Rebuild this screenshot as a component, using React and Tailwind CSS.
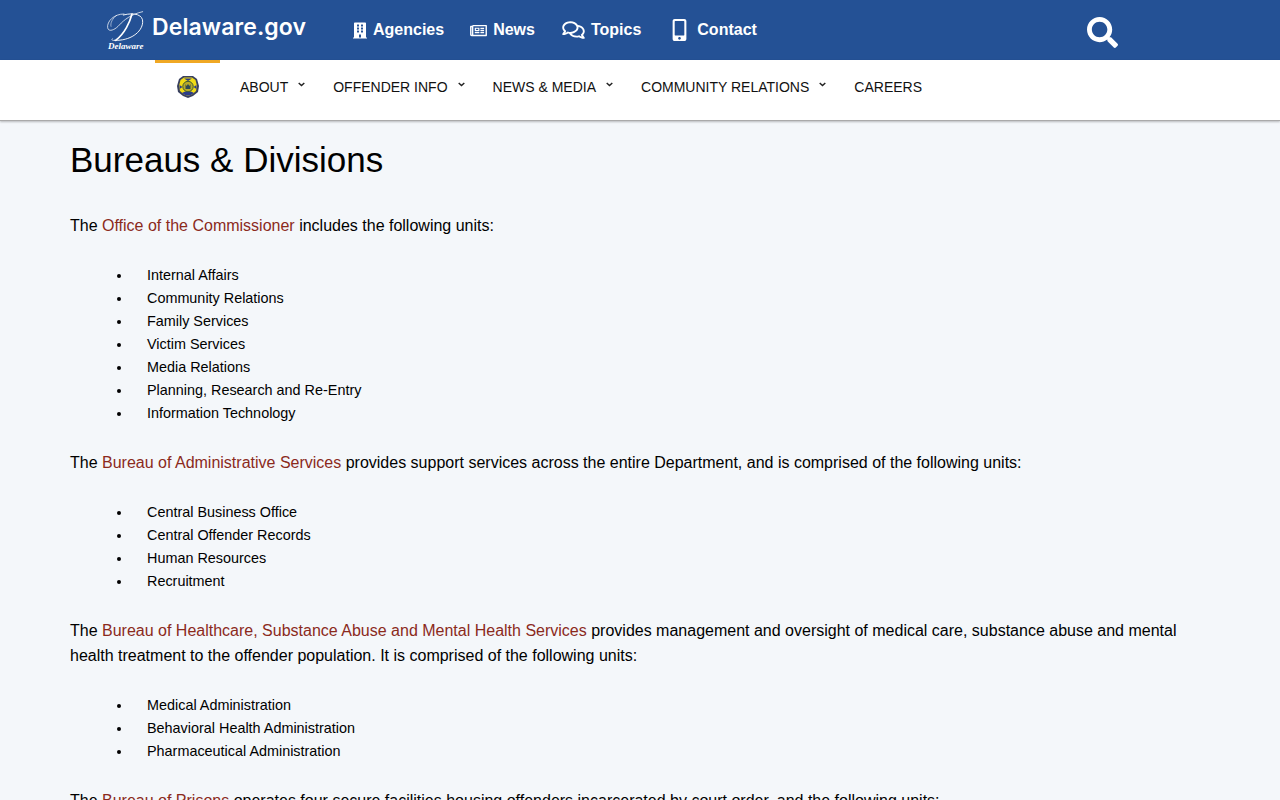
import React from "react";
import { FaBuilding, FaRegNewspaper, FaRegComments, FaMobileAlt, FaSearch } from "react-icons/fa";

const font = "font-['Liberation_Sans',Arial,sans-serif]";

function Logo() {
  return (
    <div className="relative w-[38px] h-[50px] mt-[10px] text-white shrink-0">
      <svg viewBox="21 15 114 114" className="w-[38px] h-[38px]" fill="none" stroke="white" strokeLinecap="round">
        <path d="M72 27C42 26 20 50 23 68C25 82 44 76 58 60C72 45 92 28 128 20" strokeWidth="2.200" />
        <path d="M50 31C38 40 30 54 33 64" strokeWidth="1.600" />
        <path d="M96 27C90 50 74 86 47 106" strokeWidth="5" />
        <path d="M70 30C105 21 130 30 128 52C126 82 90 108 44 106" strokeWidth="2.800" />
        <path d="M44 106C37 108 33 104 37 101" strokeWidth="2" />
      </svg>
      <span className="absolute left-[1px] top-[31px] font-['Liberation_Serif',serif] italic text-[9px] leading-[10px] font-bold">Delaware</span>
    </div>
  );
}

function Seal() {
  return (
    <svg viewBox="0 0 22 24" className="w-[22px] h-[24px]">
      <path d="M6 1h10l4 3 2 7-1 6-5 4-5 2-5-2-5-4-1-6 2-7z" fill="#39405f" />
      <path d="M7 2.500h8l3.500 2.500 1.500 6-1 5-4 3.500-4 1.500-4-1.500-4-3.500-1-5 1.500-6z" fill="#f2dc14" />
      <path d="M2.500 10l3 2-3 2zM19.500 10l-3 2 3 2zM7 3.500h8l-4 2.500z" fill="#2c3c8c" />
      <path d="M5 18l3 2 3 .800 3-.800 3-2-3-1.500h-6z" fill="#2c3c8c" />
      <circle cx="11" cy="11.500" r="5.200" fill="#b8ac2a" stroke="#3d5a34" strokeWidth="1" />
      <path d="M8.500 9v5h5V9l-1 2-1.500-2-1.500 2z" fill="#2f4a52" />
    </svg>
  );
}

function Chevron() {
  return (
    <svg viewBox="0 0 7 5" className="w-[7px] h-[5px] mb-[6px]" fill="none" stroke="#222" strokeWidth="1.500">
      <path d="M.7 1l2.800 2.500L6.300 1" />
    </svg>
  );
}

function TopLink({ icon, label, gap, ml }) {
  return (
    <a className={`flex items-center text-white font-bold text-[16px] ${gap} ${ml}`}>
      {icon}
      <span>{label}</span>
    </a>
  );
}

function NavItem({ label, ml }) {
  return (
    <a className={`flex items-center gap-[10px] text-[14px] text-[#111] ${ml}`}>
      <span>{label}</span>
      <Chevron />
    </a>
  );
}

function Units({ items }) {
  return (
    <ul className="list-disc pl-[62px] mt-[26px] mb-[25px] text-[14.4px] leading-[23px] text-black">
      {items.map((t) => (
        <li key={t} className="pl-[15px] marker:text-black">{t}</li>
      ))}
    </ul>
  );
}

function Red({ children }) {
  return <a className="text-[#8b2a1c]">{children}</a>;
}

export default function App() {
  return (
    <div className={`${font} h-[800px] overflow-hidden bg-[#f4f7fa] text-black`}>
      <header className="h-[60px] bg-[#245195] flex items-start pl-[107px]">
        <Logo />
        <span className="ml-[7px] mt-[11px] w-[155px] whitespace-nowrap font-['Inter',sans-serif] text-white font-semibold text-[23px] leading-[32px] tracking-[0.1px]">Delaware.gov</span>
        <nav className="flex items-center h-[60px] ml-[46px]">
          <TopLink icon={<FaBuilding className="w-[14px] h-[17px]" />} label="Agencies" gap="gap-[6px]" />
          <TopLink icon={<FaRegNewspaper className="w-[19px] h-[15px]" />} label="News" gap="gap-[5px]" ml="ml-[25px]" />
          <TopLink icon={<FaRegComments className="w-[25px] h-[20px]" />} label="Topics" gap="gap-[5px]" ml="ml-[26px]" />
          <TopLink icon={<FaMobileAlt className="w-[15px] h-[22px]" />} label="Contact" gap="gap-[10px]" ml="ml-[31px]" />
        </nav>
        <FaSearch className="absolute left-[1087px] top-[17px] w-[31px] h-[31px] text-white" />
      </header>
      <div className="h-[61px] bg-white border-b border-[#aaa] shadow-[0_1px_2px_rgba(0,0,0,0.25)] flex pl-[155px]">
        <div className="w-[65px] border-t-[3px] border-[#f0a824] flex justify-center pt-[12px]">
          <Seal />
        </div>
        <nav className="flex items-center h-[54px] ml-[20px]">
          <NavItem label="ABOUT" />
          <NavItem label="OFFENDER INFO" ml="ml-[28px]" />
          <NavItem label="NEWS & MEDIA" ml="ml-[28px]" />
          <NavItem label="COMMUNITY RELATIONS" ml="ml-[28px]" />
          <a className="text-[14px] text-[#111] ml-[28px]">CAREERS</a>
        </nav>
      </div>
      <main className="pl-[70px] pr-[70px]">
        <h1 className="text-[35px] leading-[40px] mt-[19px] mb-[33px] font-normal">Bureaus &amp; Divisions</h1>
        <p className="text-[16px] leading-[25px]">The <Red>Office of the Commissioner</Red> includes the following units:</p>
        <Units items={["Internal Affairs", "Community Relations", "Family Services", "Victim Services", "Media Relations", "Planning, Research and Re-Entry", "Information Technology"]} />
        <p className="text-[16px] leading-[25px]">The <Red>Bureau of Administrative Services</Red> provides support services across the entire Department, and is comprised of the following units:</p>
        <Units items={["Central Business Office", "Central Offender Records", "Human Resources", "Recruitment"]} />
        <p className="text-[16px] leading-[25px]">The <Red>Bureau of Healthcare, Substance Abuse and Mental Health Services</Red> provides management and oversight of medical care, substance abuse and mental health treatment to the offender population. It is comprised of the following units:</p>
        <Units items={["Medical Administration", "Behavioral Health Administration", "Pharmaceutical Administration"]} />
        <p className="text-[16px] leading-[25px]">The <Red>Bureau of Prisons</Red> operates four secure facilities housing offenders incarcerated by court order, and the following units:</p>
      </main>
    </div>
  );
}
